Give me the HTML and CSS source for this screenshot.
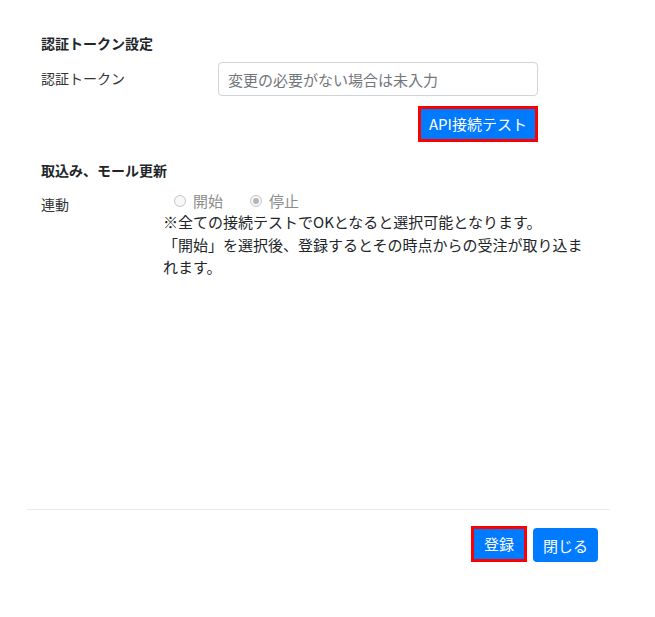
FILE: index.html
```html
<!DOCTYPE html>
<html lang="ja">
<head>
<meta charset="utf-8">
<link rel="stylesheet" href="styles.css">
</head>
<body>
<div class="modal">
  <div class="modal-body">
    <h3 class="section-title">認証トークン設定</h3>
    <div class="row row-token">
      <div class="label label-wide">認証トークン</div>
      <div class="field">
        <input class="text-input" type="text" placeholder="変更の必要がない場合は未入力">
        <div class="btn-line">
          <button class="btn btn-outlined btn-api">API接続テスト</button>
        </div>
      </div>
    </div>
    <h3 class="section-title section-two">取込み、モール更新</h3>
    <div class="row row-link">
      <div class="label label-narrow">連動</div>
      <div class="field">
        <div class="radios">
          <span class="radio-item"><span class="radio"></span><span class="radio-text">開始</span></span>
          <span class="radio-item"><span class="radio checked"></span><span class="radio-text">停止</span></span>
        </div>
        <p class="note">※全ての接続テストでOKとなると選択可能となります。<br>「開始」を選択後、登録するとその時点からの受注が取り込まれます。</p>
      </div>
    </div>
  </div>
  <div class="modal-footer">
    <button class="btn btn-outlined btn-save">登録</button>
    <button class="btn btn-close">閉じる</button>
  </div>
</div>
</body>
</html>
```
FILE: styles.css
```css
* { box-sizing: border-box; }
html, body { margin: 0; padding: 0; background: #fff; }
body {
  font-family: "Noto Sans CJK JP", "Noto Sans", sans-serif;
  color: #212529;
  font-size: 14px;
}
.modal {
  width: 583px;
  margin-left: 27px;
}
.modal-body {
  padding: 33px 14px 0 14px;
  height: 509px;
}
.section-title {
  margin: 0;
  font-size: 14px;
  font-weight: bold;
  line-height: 20px;
  color: #212529;
}
.row { display: flex; align-items: flex-start; }
.row-token { margin-top: 9px; }
.label { font-size: 14px; line-height: 20px; color: #333; }
.label-wide { width: 177px; padding-top: 6px; }
.label-narrow { width: 122px; padding-top: 3px; }
.text-input {
  display: block;
  width: 320px;
  height: 34px;
  border: 1px solid #ced4da;
  border-radius: 4px;
  padding: 0 9px;
  font-family: inherit;
  font-size: 15px;
  color: #495057;
}
.text-input::placeholder { color: #72777c; }
.btn-line { display: flex; justify-content: flex-end; margin-top: 10px; }
.btn {
  font-family: inherit;
  font-size: 15px;
  color: #fff;
  background: #007bff;
  border: none;
  border-radius: 4px;
  cursor: pointer;
}
.btn-outlined {
  border: 3px solid #ff0000;
  border-radius: 0;
  height: 36px;
  line-height: 30px;
}
.btn-api { padding: 0 8px; }
.section-two { margin-top: 18px; }
.row-link { margin-top: 11px; }
.radios { display: flex; align-items: center; height: 20px; padding-left: 11px; color: #8c8c8c; }
.radio-item { display: inline-flex; align-items: center; margin-right: 27px; }
.radio {
  width: 12px; height: 12px;
  border: 1px solid #c4c4c4;
  border-radius: 50%;
  margin-right: 7px;
  position: relative;
  background: #f8f8f8;
}
.radio.checked::after {
  content: "";
  position: absolute;
  left: 2px; top: 2px;
  width: 6px; height: 6px;
  border-radius: 50%;
  background: #b5b5b5;
}
.radio-text { font-size: 15px; line-height: 20px; }
.note {
  margin: 0;
  width: 424px;
  font-size: 15px;
  line-height: 22.5px;
  color: #212529;
}
.modal-footer {
  border-top: 1px solid #e9ecef;
  display: flex;
  justify-content: flex-end;
  align-items: flex-end;
  gap: 6px;
  padding: 16px 12px 0 0;
}
.btn-save { padding: 0 10px; }
.btn-close { height: 34px; padding: 0 10px; }
```
